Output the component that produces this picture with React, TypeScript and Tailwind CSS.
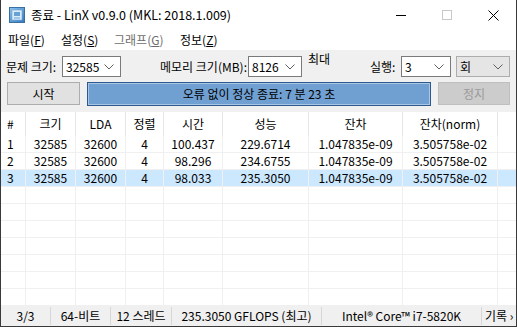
import React from "react";

const cols = [
  { w: "w-[25px]", h: "#", left: true },
  { w: "w-[50px]", h: "크기" },
  { w: "w-[50px]", h: "LDA" },
  { w: "w-[38px]", h: "정렬" },
  { w: "w-[59px]", h: "시간" },
  { w: "w-[86px]", h: "성능" },
  { w: "w-[94px]", h: "잔차" },
  { w: "w-[95px]", h: "잔차(norm)" },
];

const rows = [
  ["1", "32585", "32600", "4", "100.437", "229.6714", "1.047835e-09", "3.505758e-02"],
  ["2", "32585", "32600", "4", "98.296", "234.6755", "1.047835e-09", "3.505758e-02"],
  ["3", "32585", "32600", "4", "98.033", "235.3050", "1.047835e-09", "3.505758e-02"],
];

function Chevron() {
  return (
    <svg width="10" height="6" viewBox="0 0 10 6" className="shrink-0">
      <polyline points="0.5,0.5 5,5 9.5,0.5" fill="none" stroke="#606060" strokeWidth="1" />
    </svg>
  );
}

function Combo({ value, w, gray }: { value: string; w: string; gray?: boolean }) {
  return (
    <div
      className={`${w} h-[21px] flex items-center justify-between pl-[3px] pr-[6px] border ${
        gray ? "bg-[#e5e5e5] border-[#adadad]" : "bg-white border-[#7a7a7a]"
      }`}
    >
      <span>{value}</span>
      <Chevron />
    </div>
  );
}

function Menu({ label, k, w, dim }: { label: string; k: string; w: string; dim?: boolean }) {
  return (
    <div className={`${w} ${dim ? "text-[#6d6d6d]" : "text-black"}`}>
      {label}(<span className="underline">{k}</span>)
    </div>
  );
}

function AppIcon() {
  return (
    <svg width="16" height="16" viewBox="0 0 16 16">
      <defs>
        <linearGradient id="ic" x1="0" y1="0" x2="1" y2="1">
          <stop offset="0" stopColor="#8fc3ee" />
          <stop offset="1" stopColor="#2f79c0" />
        </linearGradient>
      </defs>
      <rect x="0.5" y="0.5" width="15" height="15" fill="url(#ic)" stroke="#3a6f9f" />
      <rect x="3" y="3" width="10" height="10" fill="#d9ecfa" stroke="#7aa7cf" strokeWidth="0.6" />
      <rect x="5" y="5" width="6" height="4" fill="#6aa1d4" />
      <line x1="5" y1="11" x2="11" y2="11" stroke="#6aa1d4" strokeWidth="1" />
    </svg>
  );
}

export default function App() {
  const emptyRows = Array.from({ length: 7 });
  return (
    <div className="w-[517px] h-[327px] overflow-hidden bg-white border border-t-0 border-[#3a3a3a] flex flex-col text-[12px] leading-[16px] text-black font-['Noto_Sans_CJK_KR','Noto_Sans',sans-serif]">
      {/* title bar */}
      <div className="h-[30px] shrink-0 flex items-center bg-white">
        <div className="ml-[8px]">
          <AppIcon />
        </div>
        <div className="ml-[6px] flex-1 text-[12.5px]">종료 - LinX v0.9.0 (MKL: 2018.1.009)</div>
        <div className="w-[46px] h-[30px] flex items-center justify-center">
          <div className="w-[10px] h-px bg-black" />
        </div>
        <div className="w-[46px] h-[30px] flex items-center justify-center">
          <div className="w-[10px] h-[10px] border border-[#c8c8c8]" />
        </div>
        <div className="w-[46px] h-[30px] flex items-center justify-center">
          <svg width="11" height="11" viewBox="0 0 11 11">
            <path d="M0.5 0.5 L10.5 10.5 M10.5 0.5 L0.5 10.5" stroke="#000" strokeWidth="1" />
          </svg>
        </div>
      </div>

      {/* menu */}
      <div className="h-[20px] shrink-0 flex items-center pl-[7px] bg-white">
        <Menu label="파일" k="F" w="w-[53px]" />
        <Menu label="설정" k="S" w="w-[53px]" />
        <Menu label="그래프" k="G" w="w-[66px]" dim />
        <Menu label="정보" k="Z" w="w-[60px]" />
      </div>

      {/* toolbar */}
      <div className="h-[62px] shrink-0 bg-[#f0f0f0] flex flex-col pt-[6px]">
        <div className="h-[21px] flex items-center pl-[5px]">
          <div className="w-[56px]">문제 크기:</div>
          <Combo value="32585" w="w-[59px]" />
          <div className="w-[39px]" />
          <div className="w-[88px]">메모리 크기(MB):</div>
          <Combo value="8126" w="w-[54px]" />
          <div className="ml-[6px] w-[62px] self-start -mt-[5px]">최대</div>
          <div className="w-[31px]">실행:</div>
          <Combo value="3" w="w-[50px]" />
          <div className="w-[5px]" />
          <Combo value="회" w="w-[54px]" gray />
        </div>
        <div className="h-[23px] mt-[5px] flex items-center pl-[6px]">
          <div className="w-[73px] h-[23px] flex items-center justify-center bg-[#e1e1e1] border border-[#adadad]">
            시작
          </div>
          <div className="ml-[7px] w-[344px] h-[24px] flex items-center justify-center bg-[#709fd2] border border-[#2c5a8e] shadow-[inset_0_0_0_1px_#a9c6e6]">
            오류 없이 정상 종료: 7 분 23 초
          </div>
          <div className="ml-[7px] w-[72px] h-[23px] flex items-center justify-center bg-[#cccccc] border border-[#bfbfbf] text-[#9a9a9a]">
            정지
          </div>
        </div>
      </div>

      {/* table */}
      <div className="flex-1 bg-white flex flex-col overflow-hidden">
        <div className="h-[24px] shrink-0 flex">
          {cols.map((c, i) => (
            <div
              key={i}
              className={`${c.w} h-full flex items-center border-r border-[#e5e5e5] ${
                c.left ? "pl-[6px]" : "justify-center"
              }`}
            >
              {c.h}
            </div>
          ))}
        </div>
        {rows.map((r, ri) => (
          <div
            key={ri}
            className={`h-[17px] shrink-0 flex border-b border-[#f0f0f0] ${ri === 2 ? "bg-[#cce8ff]" : ""}`}
          >
            {r.map((v, i) => (
              <div
                key={i}
                className={`${cols[i].w} h-full flex items-center border-r border-[#f0f0f0] ${
                  cols[i].left ? "pl-[6px]" : "justify-center"
                }`}
              >
                {v}
              </div>
            ))}
          </div>
        ))}
        {emptyRows.map((_, ri) => (
          <div key={ri} className="h-[17px] shrink-0 flex border-b border-[#f0f0f0]">
            {cols.map((c, i) => (
              <div key={i} className={`${c.w} h-full border-r border-[#f0f0f0]`} />
            ))}
          </div>
        ))}
      </div>

      {/* status bar */}
      <div className="h-[21px] shrink-0 bg-[#f0f0f0] flex items-center">
        <div className="w-[49px] text-center">3/3</div>
        <div className="w-px h-[18px] bg-[#d7d7d7]" />
        <div className="w-[59px] text-center">64-비트</div>
        <div className="w-px h-[18px] bg-[#d7d7d7]" />
        <div className="w-[60px] text-center">12 스레드</div>
        <div className="w-px h-[18px] bg-[#d7d7d7]" />
        <div className="w-[149px] text-center">235.3050 GFLOPS (최고)</div>
        <div className="w-px h-[18px] bg-[#d7d7d7]" />
        <div className="w-[159px] text-center">Intel® Core™ i7-5820K</div>
        <div className="w-px h-[18px] bg-[#d7d7d7]" />
        <div className="flex-1 pl-[3px] whitespace-nowrap">기록 ›</div>
      </div>
    </div>
  );
}
